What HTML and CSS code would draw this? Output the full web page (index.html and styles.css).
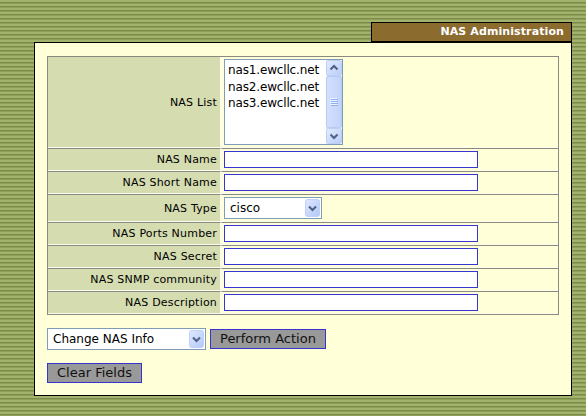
FILE: index.html
```html
<!DOCTYPE html>
<html>
<head>
<meta charset="utf-8">
<title>NAS Administration</title>
<link rel="stylesheet" href="styles.css">
</head>
<body>
<div class="page">
  <div class="tabrow"><div class="tab">NAS Administration</div></div>
  <div class="panel">
    <table class="grid">
      <colgroup><col class="col-label"><col class="col-value"></colgroup>
      <tr class="row-first">
        <th>NAS List</th>
        <td>
          <div class="listbox">
            <ul class="list-items">
              <li>nas1.ewcllc.net</li>
              <li>nas2.ewcllc.net</li>
              <li>nas3.ewcllc.net</li>
            </ul>
            <div class="scroll">
              <svg class="sb-btn" width="16" height="16" viewBox="0 0 16 16">
                <defs><linearGradient id="gb" x1="0" y1="0" x2="1" y2="1"><stop offset="0" stop-color="#e3ebfe"/><stop offset="1" stop-color="#b9cdf9"/></linearGradient></defs>
                <rect x="0.5" y="0.5" width="15" height="15" rx="2" fill="url(#gb)" stroke="#bccff6"/>
                <path d="M4.5 9.5 L8 6 L11.5 9.5" fill="none" stroke="#4d6185" stroke-width="2"/>
              </svg>
              <div class="sb-thumb">
                <svg width="8" height="8" viewBox="0 0 8 8">
                  <path d="M0 0.5H7M0 2.5H7M0 4.5H7M0 6.5H7" stroke="#eef3fe" stroke-width="1"/>
                  <path d="M1 1.5H8M1 3.5H8M1 5.5H8M1 7.5H8" stroke="#8fb0f5" stroke-width="1"/>
                </svg>
              </div>
              <svg class="sb-btn" width="16" height="16" viewBox="0 0 16 16">
                <rect x="0.5" y="0.5" width="15" height="15" rx="2" fill="url(#gb)" stroke="#bccff6"/>
                <path d="M4.5 6.5 L8 10 L11.5 6.5" fill="none" stroke="#4d6185" stroke-width="2"/>
              </svg>
            </div>
          </div>
        </td>
      </tr>
      <tr><th>NAS Name</th><td><input class="txt" type="text"></td></tr>
      <tr><th>NAS Short Name</th><td><input class="txt" type="text"></td></tr>
      <tr class="row-type">
        <th>NAS Type</th>
        <td>
          <div class="combo combo-type">
            <select class="combo-sel"><option>cisco</option></select>
            <svg class="combo-btn" width="15" height="18" viewBox="0 0 15 18">
              <defs><linearGradient id="gc" x1="0" y1="0" x2="1" y2="1"><stop offset="0" stop-color="#dfe8fe"/><stop offset="1" stop-color="#b3c8f8"/></linearGradient></defs>
              <rect x="0.5" y="0.5" width="14" height="17" rx="2" fill="url(#gc)" stroke="#c0d1f7"/>
              <path d="M4 7.5 L7.5 11 L11 7.5" fill="none" stroke="#4d6185" stroke-width="2"/>
            </svg>
          </div>
        </td>
      </tr>
      <tr><th>NAS Ports Number</th><td><input class="txt" type="text"></td></tr>
      <tr><th>NAS Secret</th><td><input class="txt" type="text"></td></tr>
      <tr><th>NAS SNMP community</th><td><input class="txt" type="text"></td></tr>
      <tr><th>NAS Description</th><td><input class="txt" type="text"></td></tr>
    </table>

    <div class="actions">
      <div class="combo combo-action">
        <select class="combo-sel"><option>Change NAS Info</option></select>
        <svg class="combo-btn" width="15" height="18" viewBox="0 0 15 18">
          <rect x="0.5" y="0.5" width="14" height="17" rx="2" fill="url(#gc)" stroke="#c0d1f7"/>
          <path d="M4 7.5 L7.5 11 L11 7.5" fill="none" stroke="#4d6185" stroke-width="2"/>
        </svg>
      </div>
      <button class="btn" type="button">Perform Action</button>
    </div>
    <div class="actions2">
      <button class="btn" type="button">Clear Fields</button>
    </div>
  </div>
</div>
</body>
</html>
```
FILE: styles.css
```css
* { box-sizing: border-box; }
html, body { margin: 0; padding: 0; }
body {
  width: 586px;
  height: 416px;
  overflow: hidden;
  font-family: "DejaVu Sans", Verdana, sans-serif;
  background: repeating-linear-gradient(to bottom,
    #a3b36d 0, #a3b36d 2px,
    #7b8c48 2px, #7b8c48 3px,
    #8d9e59 3px, #8d9e59 4px);
}
.page {
  padding: 22px 0 0 34px;
}
.tabrow {
  display: flex;
  justify-content: flex-end;
  width: 538px;
}
.tab {
  width: 201px;
  height: 20px;
  background: #8b6b2e;
  border: 1px solid #000;
  color: #fff;
  font-weight: bold;
  font-size: 11px;
  letter-spacing: 0.1px;
  line-height: 18px;
  text-align: right;
  padding-right: 7px;
}
.panel {
  width: 538px;
  height: 354px;
  background: #ffffd8;
  border: 1px solid #000;
  padding: 13px 12px 0 12px;
}
.grid {
  width: 512px;
  table-layout: fixed;
  border-collapse: separate;
  border-spacing: 0;
  border: 1px solid #8a8a80;
  font-size: 11px;
  letter-spacing: 0.2px;
}
.col-label { width: 173px; }
.col-value { width: 337px; }
.grid th {
  background: #d4dcb0;
  text-align: right;
  font-weight: normal;
  color: #000;
  padding: 0 3px 0 0;
  border-top: 1px solid #8a8a80;
  border-bottom: 1px solid #fbfbee;
  border-right: 1px solid #fbfbee;
  white-space: nowrap;
}
.grid td {
  padding: 2px 0 2px 2px;
  border-top: 1px solid #8a8a80;
  border-bottom: 1px solid #fbfbee;
  border-left: 1px solid #fbfbee;
  text-align: left;
}
.grid .row-first th,
.grid .row-first td { border-top: none; }
.txt {
  display: block;
  width: 254px;
  height: 17px;
  margin: 0;
  padding: 0 2px;
  border: 1px solid #3636d4;
  background: #fff;
  font-size: 11px;
}
.listbox {
  display: flex;
  width: 119px;
  height: 86px;
  border: 1px solid #7f9db9;
  background: #fff;
}
.list-items {
  flex: 1;
  margin: 0;
  padding: 2px 0 0 3px;
  list-style: none;
  font-size: 12px;
  line-height: 16.5px;
  letter-spacing: -0.15px;
  color: #000;
}
.scroll {
  width: 16px;
  display: flex;
  flex-direction: column;
  background: #f3f3ee;
}
.sb-btn { display: block; flex: none; }
.sb-thumb {
  flex: 1;
  display: flex;
  align-items: center;
  justify-content: center;
  background: linear-gradient(to right, #d3e0fd, #c2d3fb);
  border: 1px solid #b6caf5;
  border-radius: 2px;
}
.sb-thumb svg { display: block; }
.combo {
  position: relative;
  height: 22px;
}
.combo-type { width: 98px; }
.combo-action { width: 159px; }
.combo-sel {
  appearance: none;
  -webkit-appearance: none;
  display: block;
  width: 100%;
  height: 100%;
  margin: 0;
  padding: 0 0 0 5px;
  border: 1px solid #7f9db9;
  border-radius: 0;
  background: #fff;
  color: #000;
  font-family: "DejaVu Sans", Verdana, sans-serif;
  font-size: 12px;
}
.combo-btn {
  position: absolute;
  right: 2px;
  top: 2px;
  pointer-events: none;
}
.actions {
  display: flex;
  align-items: center;
  gap: 4px;
  margin-top: 13px;
}
.actions2 {
  display: flex;
  margin-top: 13px;
}
.btn {
  height: 20px;
  margin: 0;
  padding: 0 9px;
  border: 1px solid #3434d0;
  background: #999999;
  color: #111;
  font-family: "DejaVu Sans", Verdana, sans-serif;
  font-size: 13px;
  line-height: 18px;
}
```
